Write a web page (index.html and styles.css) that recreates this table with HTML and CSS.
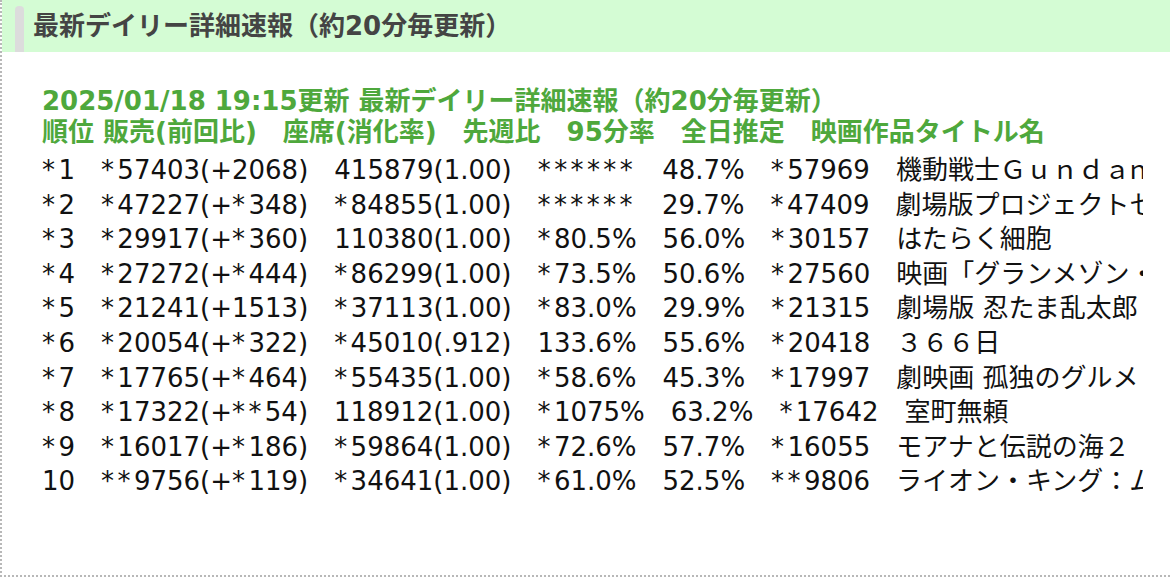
FILE: index.html
```html
<!DOCTYPE html>
<html lang="ja">
<head>
<meta charset="utf-8">
<link rel="stylesheet" href="styles.css">
</head>
<body>
<div class="box">
  <h2 class="title"><span class="title-bar"></span><span class="title-text">最新デイリー詳細速報（約20分毎更新）</span></h2>
  <div class="body">
    <div class="heading">2025/01/18 19:15更新 最新デイリー詳細速報（約20分毎更新）</div>
    <div class="heading">順位 販売(前回比)　座席(消化率)　先週比　95分率　全日推定　映画作品タイトル名</div>
    <div class="rows">
      <div class="row"><span class="p">*</span>1　<span class="p">*</span>57403(+2068)　415879(1.00)　<span class="p">******</span>　48.7%　<span class="p">*</span>57969　機動戦士Ｇｕｎｄａｍ　ＧＱｕｕｕｕＸ　－Ｂｅｇｉｎｎｉｎｇ－</div>
      <div class="row"><span class="p">*</span>2　<span class="p">*</span>47227(+<span class="p">*</span>348)　<span class="p">*</span>84855(1.00)　<span class="p">******</span>　29.7%　<span class="p">*</span>47409　劇場版プロジェクトセカイ　壊れたセカイと歌えないミク</div>
      <div class="row"><span class="p">*</span>3　<span class="p">*</span>29917(+<span class="p">*</span>360)　110380(1.00)　<span class="p">*</span>80.5%　56.0%　<span class="p">*</span>30157　はたらく細胞</div>
      <div class="row"><span class="p">*</span>4　<span class="p">*</span>27272(+<span class="p">*</span>444)　<span class="p">*</span>86299(1.00)　<span class="p">*</span>73.5%　50.6%　<span class="p">*</span>27560　映画「グランメゾン・パリ」</div>
      <div class="row"><span class="p">*</span>5　<span class="p">*</span>21241(+1513)　<span class="p">*</span>37113(1.00)　<span class="p">*</span>83.0%　29.9%　<span class="p">*</span>21315　劇場版 忍たま乱太郎 ドクタケ忍者隊最強の軍師</div>
      <div class="row"><span class="p">*</span>6　<span class="p">*</span>20054(+<span class="p">*</span>322)　<span class="p">*</span>45010(.912)　133.6%　55.6%　<span class="p">*</span>20418　３６６日</div>
      <div class="row"><span class="p">*</span>7　<span class="p">*</span>17765(+<span class="p">*</span>464)　<span class="p">*</span>55435(1.00)　<span class="p">*</span>58.6%　45.3%　<span class="p">*</span>17997　劇映画 孤独のグルメ</div>
      <div class="row"><span class="p">*</span>8　<span class="p">*</span>17322(+<span class="p">**</span>54)　118912(1.00)　<span class="p">*</span>1075%　63.2%　<span class="p">*</span>17642　室町無頼</div>
      <div class="row"><span class="p">*</span>9　<span class="p">*</span>16017(+<span class="p">*</span>186)　<span class="p">*</span>59864(1.00)　<span class="p">*</span>72.6%　57.7%　<span class="p">*</span>16055　モアナと伝説の海２</div>
      <div class="row">10　<span class="p">**</span>9756(+<span class="p">*</span>119)　<span class="p">*</span>34641(1.00)　<span class="p">*</span>61.0%　52.5%　<span class="p">**</span>9806　ライオン・キング：ムファサ</div>
    </div>
  </div>
</div>
</body>
</html>
```

FILE: styles.css
```css
html, body {
  margin: 0;
  padding: 0;
  background: #ffffff;
}
body {
  width: 1170px;
  height: 578px;
  overflow: hidden;
  font-family: "DejaVu Sans", "Noto Sans CJK JP", sans-serif;
}
.box {
  border-left: 2px dotted #b8b8b8;
  border-bottom: 2px dotted #b8b8b8;
  height: 577px;
  box-sizing: border-box;
}
.title {
  margin: 0;
  height: 52px;
  background: #d4fcd4;
  display: flex;
  align-items: flex-end;
  padding-left: 13px;
}
.title-bar {
  width: 9px;
  height: 46px;
  background: #dcdcdc;
  border-radius: 4px 4px 0 0;
}
.title-text {
  align-self: center;
  margin-left: 9px;
  font-family: "DejaVu Sans", "Noto Sans CJK JP", sans-serif;
  font-size: 26px;
  font-weight: bold;
  color: #444444;
  line-height: 52px;
}
.body {
  padding: 34px 27px 0 40px;
  overflow: hidden;
}
.heading {
  font-weight: bold;
  font-size: 26px;
  line-height: 31px;
  color: #4ea83c;
  white-space: pre;
}
.rows {
  margin-top: 5px;
}
.row {
  font-size: 26px;
  line-height: 34.6px;
  color: #111111;
  white-space: pre;
  overflow: hidden;
}
.p {
  letter-spacing: 3.4px;
}
```
